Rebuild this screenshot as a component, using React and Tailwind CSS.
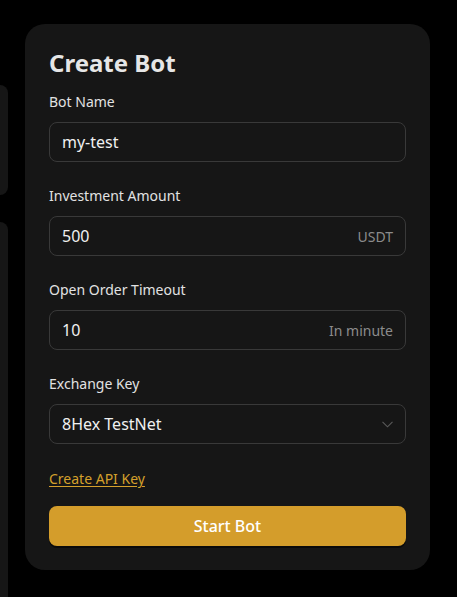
import React, { useState } from 'react';

const FIELDS = [
  { label: 'Bot Name', value: 'my-test' },
  { label: 'Investment Amount', value: '500', suffix: 'USDT' },
  { label: 'Open Order Timeout', value: '10', suffix: 'In minute' },
];

export default function App() {
  const [values, setValues] = useState(FIELDS.map(f => f.value));

  return (
    <div className="w-[457px] h-[597px] bg-black overflow-hidden flex font-['Noto_Sans',sans-serif]">
      {/* left column, mostly off-screen */}
      <div className="w-[8px] shrink-0 flex flex-col pt-[85px] gap-[27px]">
        <div className="h-[110px] bg-[#161616] rounded-r-[18px]" />
        <div className="flex-1 bg-[#161616] rounded-tr-[18px]" />
      </div>

      <div className="pl-[17px] pt-[24px]">
        <div className="w-[405px] bg-[#161616] rounded-[20px] px-6 pt-[23px] pb-6">
          <h1 className="text-[24px] leading-8 font-bold text-[#e6e6e6]">Create Bot</h1>

          <div className="mt-[13px] flex flex-col gap-6">
            {FIELDS.map((f, i) => (
              <div key={f.label}>
                <div className="text-[14px] leading-5 text-[#e2e2e2]">{f.label}</div>
                <div className="mt-[10px] h-10 rounded-lg border border-[#393939] flex items-center px-3">
                  <input
                    value={values[i]}
                    onChange={e => setValues(v => v.map((x, j) => (j === i ? e.target.value : x)))}
                    className="flex-1 min-w-0 bg-transparent outline-none text-[16px] text-[#f0f0f0]"
                  />
                  {f.suffix && <span className="text-[14px] text-[#8c8c8c]">{f.suffix}</span>}
                </div>
              </div>
            ))}

            <div>
              <div className="text-[14px] leading-5 text-[#e2e2e2]">Exchange Key</div>
              <div className="mt-[10px] h-10 rounded-lg border border-[#393939] flex items-center justify-between px-3">
                <span className="text-[16px] text-[#f0f0f0]">8Hex TestNet</span>
                <svg width="11" height="7" viewBox="0 0 11 7" fill="none">
                  <path d="M0.5 0.8 L5.5 5.8 L10.5 0.8" stroke="#5a5a5a" strokeWidth="1.1" />
                </svg>
              </div>
            </div>
          </div>

          <a href="#" className="mt-[25px] inline-block text-[14px] leading-5 text-[#d4a02c] underline underline-offset-2">
            Create API Key
          </a>

          <button className="mt-4 w-full h-10 rounded-lg bg-[#d49d2b] text-white text-[16px] font-medium shadow-[0_2px_0_#0a0a0a]">
            Start Bot
          </button>
        </div>
      </div>
    </div>
  );
}
